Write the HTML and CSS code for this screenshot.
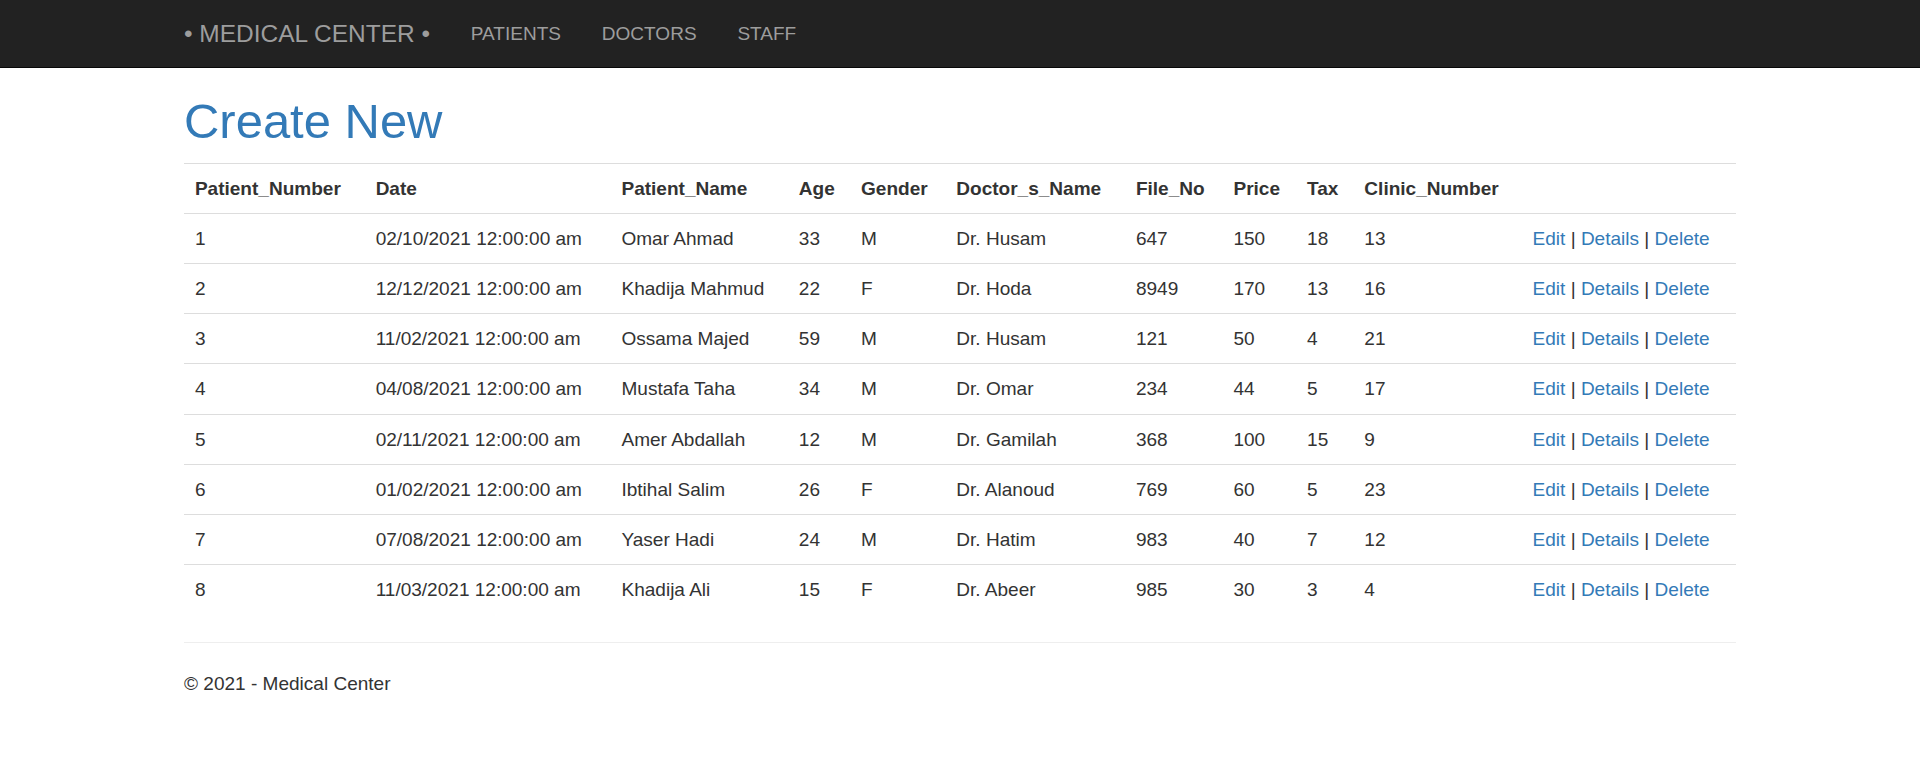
FILE: index.html
```html
<!DOCTYPE html>
<html lang="en">
<head>
<meta charset="utf-8">
<title>Index - Medical Center</title>
<link rel="stylesheet" href="styles.css">
</head>
<body>
<div class="navbar">
  <div class="container nav-inner">
    <a class="brand" href="#">• MEDICAL CENTER •</a>
    <ul class="nav">
      <li><a href="#">PATIENTS</a></li>
      <li><a href="#">DOCTORS</a></li>
      <li><a href="#">STAFF</a></li>
    </ul>
  </div>
</div>
<div class="container body-content">
  <h1 class="page-title"><a href="#">Create New</a></h1>
  <table class="table">
    <tr>
      <th>Patient_Number</th><th>Date</th><th>Patient_Name</th><th>Age</th><th>Gender</th><th>Doctor_s_Name</th><th>File_No</th><th>Price</th><th>Tax</th><th>Clinic_Number</th><th></th>
    </tr>
    <tr><td>1</td><td>02/10/2021 12:00:00 am</td><td>Omar Ahmad</td><td>33</td><td>M</td><td>Dr. Husam</td><td>647</td><td>150</td><td>18</td><td>13</td><td><a href="#">Edit</a> | <a href="#">Details</a> | <a href="#">Delete</a></td></tr>
    <tr><td>2</td><td>12/12/2021 12:00:00 am</td><td>Khadija Mahmud</td><td>22</td><td>F</td><td>Dr. Hoda</td><td>8949</td><td>170</td><td>13</td><td>16</td><td><a href="#">Edit</a> | <a href="#">Details</a> | <a href="#">Delete</a></td></tr>
    <tr><td>3</td><td>11/02/2021 12:00:00 am</td><td>Ossama Majed</td><td>59</td><td>M</td><td>Dr. Husam</td><td>121</td><td>50</td><td>4</td><td>21</td><td><a href="#">Edit</a> | <a href="#">Details</a> | <a href="#">Delete</a></td></tr>
    <tr><td>4</td><td>04/08/2021 12:00:00 am</td><td>Mustafa Taha</td><td>34</td><td>M</td><td>Dr. Omar</td><td>234</td><td>44</td><td>5</td><td>17</td><td><a href="#">Edit</a> | <a href="#">Details</a> | <a href="#">Delete</a></td></tr>
    <tr><td>5</td><td>02/11/2021 12:00:00 am</td><td>Amer Abdallah</td><td>12</td><td>M</td><td>Dr. Gamilah</td><td>368</td><td>100</td><td>15</td><td>9</td><td><a href="#">Edit</a> | <a href="#">Details</a> | <a href="#">Delete</a></td></tr>
    <tr><td>6</td><td>01/02/2021 12:00:00 am</td><td>Ibtihal Salim</td><td>26</td><td>F</td><td>Dr. Alanoud</td><td>769</td><td>60</td><td>5</td><td>23</td><td><a href="#">Edit</a> | <a href="#">Details</a> | <a href="#">Delete</a></td></tr>
    <tr><td>7</td><td>07/08/2021 12:00:00 am</td><td>Yaser Hadi</td><td>24</td><td>M</td><td>Dr. Hatim</td><td>983</td><td>40</td><td>7</td><td>12</td><td><a href="#">Edit</a> | <a href="#">Details</a> | <a href="#">Delete</a></td></tr>
    <tr><td>8</td><td>11/03/2021 12:00:00 am</td><td>Khadija Ali</td><td>15</td><td>F</td><td>Dr. Abeer</td><td>985</td><td>30</td><td>3</td><td>4</td><td><a href="#">Edit</a> | <a href="#">Details</a> | <a href="#">Delete</a></td></tr>
  </table>
  <hr class="rule">
  <footer class="footer">
    <p>© 2021 - Medical Center</p>
  </footer>
</div>
</body>
</html>
```
FILE: styles.css
```css
* {
  box-sizing: border-box;
}

html, body {
  margin: 0;
  padding: 0;
}

body {
  font-family: "Liberation Sans", Arial, Helvetica, sans-serif;
  font-size: 19.04px;
  line-height: 27.2px;
  color: #333;
  background: #fff;
}

a {
  color: #337ab7;
  text-decoration: none;
}

.container {
  width: 1592px;
  margin: 0 auto;
  padding: 0 20px;
}

/* navbar */
.navbar {
  height: 68px;
  background: #222;
  border-bottom: 1px solid #080808;
}

.nav-inner {
  display: flex;
  align-items: flex-start;
  height: 100%;
}

.brand {
  display: block;
  height: 67px;
  margin-left: -20.4px;
  padding: 20.4px;
  font-size: 24.48px;
  line-height: 27.2px;
  color: #9d9d9d;
  white-space: nowrap;
}

.nav {
  display: flex;
  list-style: none;
  margin: 0;
  padding: 0;
}

.nav a {
  display: block;
  padding: 20.4px;
  line-height: 27.2px;
  color: #9d9d9d;
}

/* heading */
.page-title {
  margin: 27.2px 0 13.6px;
  font-size: 48.96px;
  font-weight: 500;
  line-height: 1.1;
}

/* table */
.table {
  width: 100%;
  border-collapse: collapse;
  border-spacing: 0;
  margin-bottom: 27.2px;
}

.table th,
.table td {
  padding: 11px 10.88px;
  line-height: 27.2px;
  vertical-align: top;
  text-align: left;
  border-top: 1px solid #ddd;
}

.table th {
  font-weight: bold;
}

.rule {
  margin: 27.2px 0;
  border: 0;
  border-top: 1px solid #eee;
  height: 0;
}

.footer p {
  margin: 0 0 13.6px;
}
```
